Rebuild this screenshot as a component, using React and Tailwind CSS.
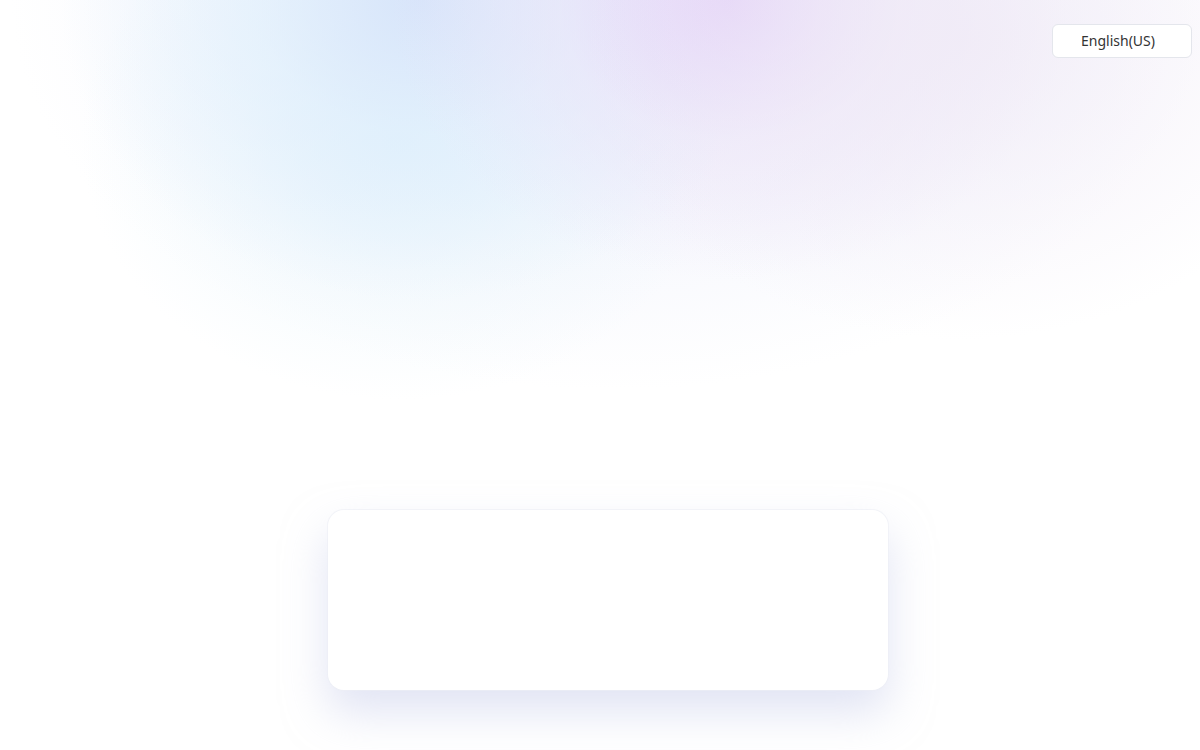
export default function App() {
  return (
    <div className="relative w-full min-h-[750px] h-[750px] overflow-hidden bg-white" style={{ fontFamily: '"Noto Sans", "Open Sans", sans-serif' }}>
      <div className="pointer-events-none absolute inset-0 bg-[radial-gradient(ellipse_600px_400px_at_610px_-10px,rgba(236,240,252,1)_0%,rgba(242,244,252,0.7)_55%,rgba(255,255,255,0)_100%)]" />
      <div className="pointer-events-none absolute inset-0 bg-[radial-gradient(ellipse_320px_260px_at_400px_140px,rgba(226,242,252,0.9)_0%,rgba(234,246,252,0.5)_50%,rgba(255,255,255,0)_100%)]" />
      <div className="pointer-events-none absolute inset-0 bg-[radial-gradient(ellipse_360px_300px_at_420px_0px,rgba(214,228,250,0.95)_0%,rgba(222,238,252,0.6)_45%,rgba(255,255,255,0)_100%)]" />
      <div className="pointer-events-none absolute inset-0 bg-[radial-gradient(ellipse_340px_280px_at_730px_0px,rgba(228,210,248,0.95)_0%,rgba(236,226,248,0.5)_50%,rgba(255,255,255,0)_100%)]" />
      <div className="pointer-events-none absolute inset-0 bg-[radial-gradient(ellipse_380px_300px_at_960px_40px,rgba(240,234,246,0.8)_0%,rgba(255,255,255,0)_100%)]" />
      <div className="relative flex justify-end pt-6 pr-2">
        <button className="w-[140px] h-[34px] rounded-md border border-[#e4e6ec] bg-white pr-2 pb-0.5 text-[14px] text-[#333]">English(US)</button>
      </div>
      <div className="relative flex justify-center pt-[452px] pl-4">
        <div className="w-[560px] h-[180px] rounded-2xl bg-white shadow-[0_0_0_1px_rgba(236,238,245,0.6),0_22px_44px_rgba(196,202,234,0.5)]" />
      </div>
    </div>
  );
}
